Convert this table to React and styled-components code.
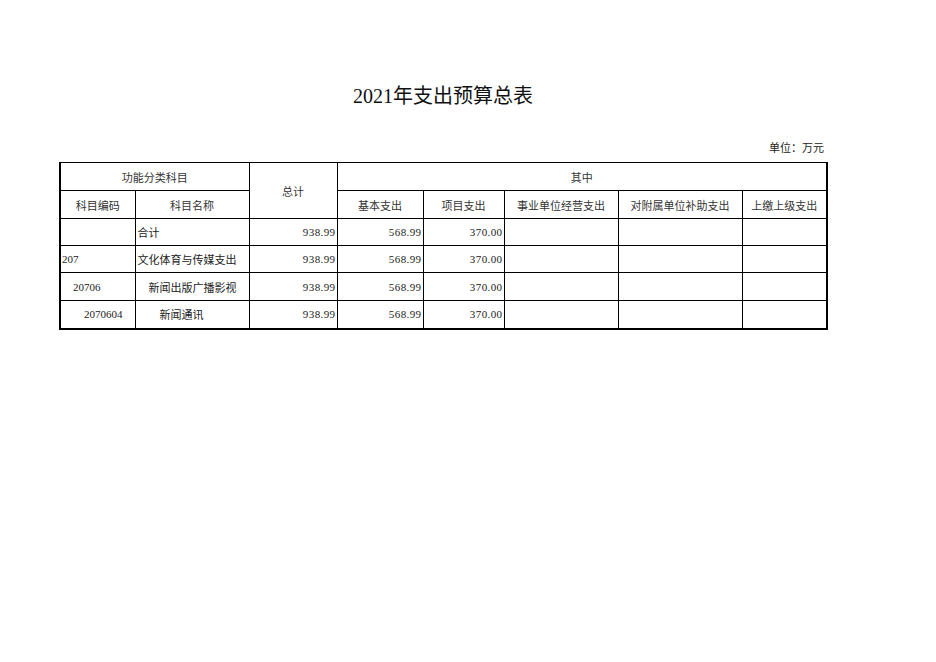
import React from "react";
import styled, { createGlobalStyle } from "styled-components";

const GlobalStyle = createGlobalStyle`
  body {
    margin: 0;
    background: #ffffff;
    font-family: "Liberation Serif", "Noto Sans CJK SC", serif;
    color: #222;
  }
`;

const columns = [75, 114, 88, 86, 81, 114, 124, 85];

const rows = [
  { code: "", name: "合计", level: 0, total: "938.99", basic: "568.99", project: "370.00" },
  { code: "207", name: "文化体育与传媒支出", level: 0, total: "938.99", basic: "568.99", project: "370.00" },
  { code: "20706", name: "新闻出版广播影视", level: 1, total: "938.99", basic: "568.99", project: "370.00" },
  { code: "2070604", name: "新闻通讯", level: 2, total: "938.99", basic: "568.99", project: "370.00" },
];

function App() {
  return (
    <Sheet>
      <GlobalStyle />
      <Title>2021年支出预算总表</Title>
      <Unit>单位：万元</Unit>
      <Table>
        <colgroup>
          {columns.map((w, i) => (
            <col key={i} style={{ width: w }} />
          ))}
        </colgroup>
        <thead>
          <HeadRow>
            <Head colSpan={2}>功能分类科目</Head>
            <Head rowSpan={2}>总计</Head>
            <Head colSpan={5}>其中</Head>
          </HeadRow>
          <HeadRow>
            <Head>科目编码</Head>
            <Head>科目名称</Head>
            <Head>基本支出</Head>
            <Head>项目支出</Head>
            <Head>事业单位经营支出</Head>
            <Head>对附属单位补助支出</Head>
            <Head>上缴上级支出</Head>
          </HeadRow>
        </thead>
        <tbody>
          {rows.map((r, i) => (
            <BodyRow key={i}>
              <CodeCell $level={r.level}>{r.code}</CodeCell>
              <NameCell $level={r.level}>{r.name}</NameCell>
              <NumCell>{r.total}</NumCell>
              <NumCell>{r.basic}</NumCell>
              <NumCell>{r.project}</NumCell>
              <NumCell />
              <NumCell />
              <NumCell />
            </BodyRow>
          ))}
        </tbody>
      </Table>
    </Sheet>
  );
}

export default App;

const Sheet = styled.div`
  padding-left: 59px;
  width: 768px;
`;

const Title = styled.h1`
  margin: 84px 0 0;
  font-size: 20px;
  font-weight: normal;
  line-height: 24px;
  text-align: center;
  color: #111;
`;

const Unit = styled.div`
  margin-top: 34px;
  margin-bottom: 8px;
  padding-right: 3px;
  font-size: 11px;
  line-height: 12px;
  text-align: right;
`;

const Table = styled.table`
  border-collapse: collapse;
  table-layout: fixed;
  width: 768px;
  border-top: 1px solid #000;
  border-left: 2px solid #000;
  border-right: 2px solid #000;
  border-bottom: 2px solid #000;
  font-size: 11px;
`;

const HeadRow = styled.tr`
  height: 28px;
`;

const BodyRow = styled.tr`
  height: 27px;
  &:nth-child(n + 3) {
    height: 28px;
  }
`;

const Head = styled.th`
  border: 1px solid #000;
  font-weight: normal;
  text-align: center;
  padding: 0;
  color: #333;
`;

const CodeCell = styled.td`
  border: 1px solid #000;
  padding: 0 0 0 ${(p) => 1 + p.$level * 11}px;
  text-align: left;
  white-space: nowrap;
  overflow: hidden;
`;

const NameCell = styled.td`
  border: 1px solid #000;
  padding: 0 0 0 ${(p) => 2 + p.$level * 11}px;
  text-align: left;
  white-space: nowrap;
  overflow: hidden;
`;

const NumCell = styled.td`
  border: 1px solid #000;
  padding: 0 1px 0 0;
  text-align: right;
  white-space: nowrap;
  letter-spacing: 0.4px;
`;
